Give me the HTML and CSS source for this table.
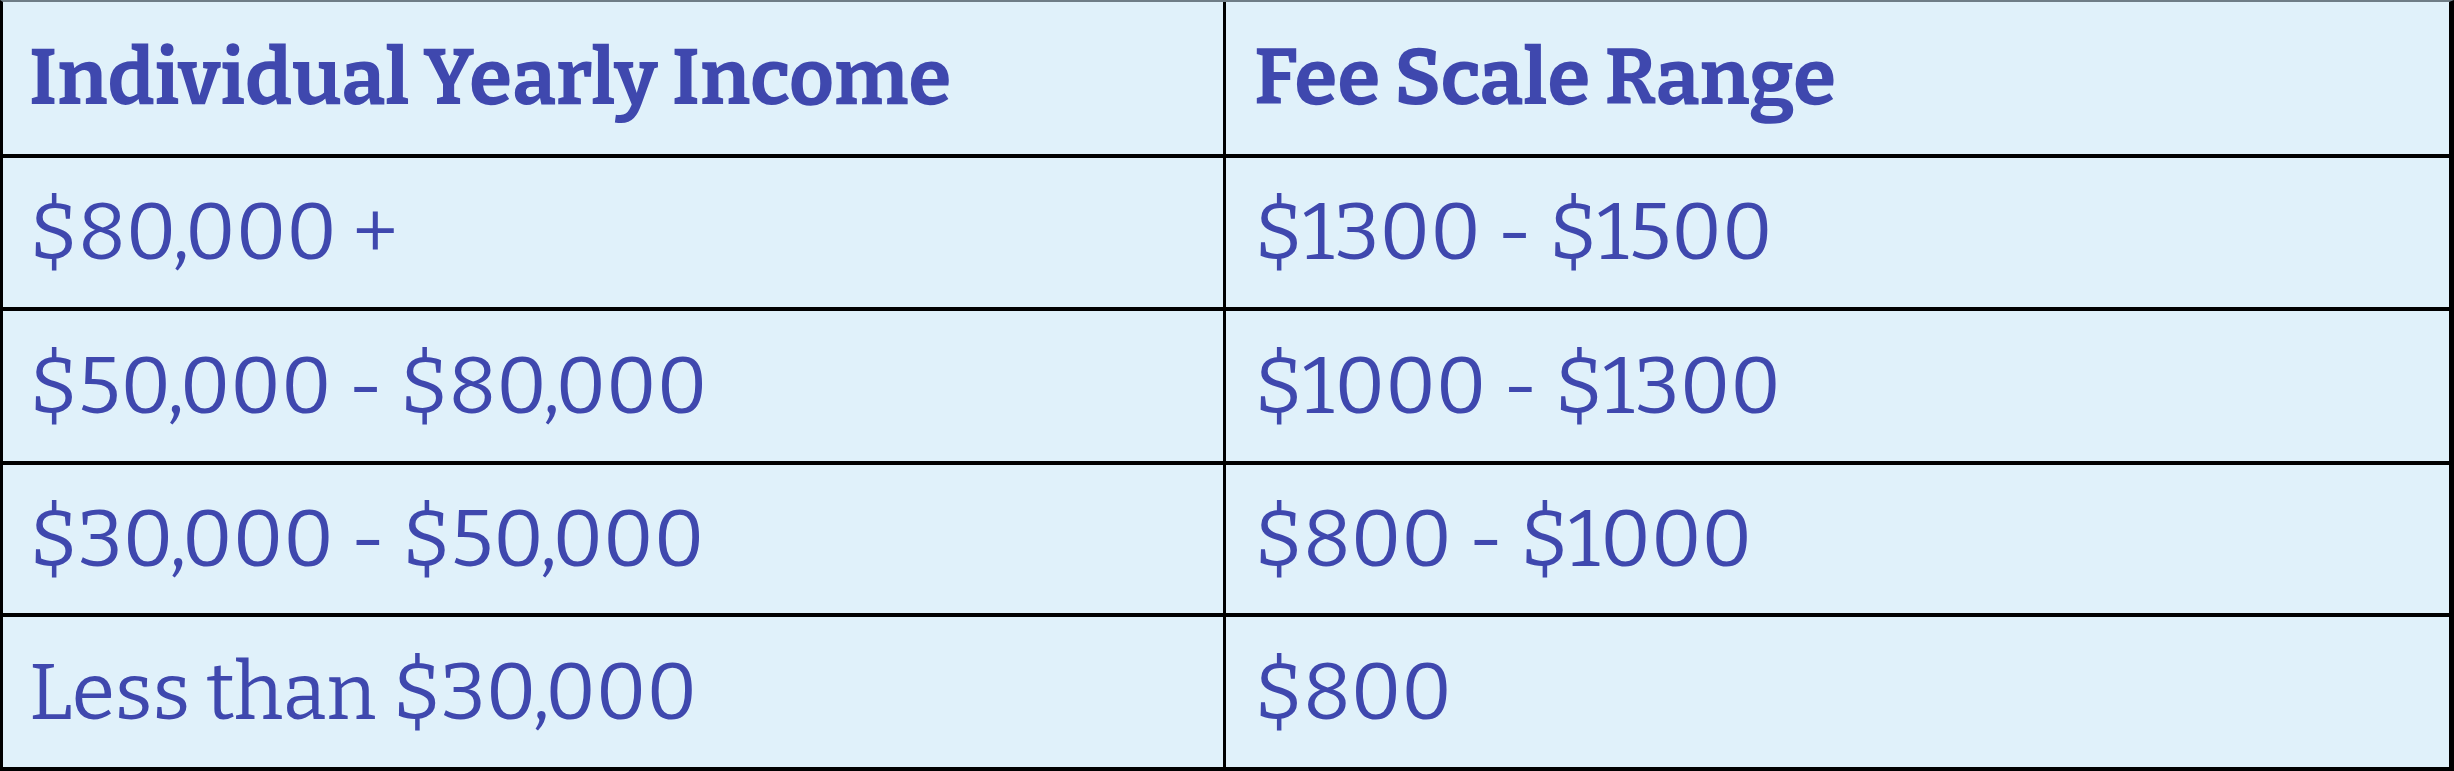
FILE: index.html
```html
<!DOCTYPE html>
<html lang="en">
<head>
<meta charset="utf-8">
<title>Fee Scale</title>
<link rel="stylesheet" href="styles.css">
</head>
<body>
<div class="fee-table">
  <div class="cell head">Individual Yearly Income</div>
  <div class="cell head right">Fee Scale Range</div>
  <div class="cell">$80,000 +</div>
  <div class="cell right">$1300 - $1500</div>
  <div class="cell">$50,000 - $80,000</div>
  <div class="cell right">$1000 - $1300</div>
  <div class="cell">$30,000 - $50,000</div>
  <div class="cell right">$800 - $1000</div>
  <div class="cell last">Less than $30,000</div>
  <div class="cell right last">$800</div>
</div>
</body>
</html>
```
FILE: styles.css
```css
html, body {
  margin: 0;
  padding: 0;
  background: #e0f1fa;
}

.fee-table {
  box-sizing: border-box;
  width: 2454px;
  height: 771px;
  display: grid;
  grid-template-columns: 1fr 1fr;
  grid-template-rows: 156px 153px 154px 152px 150px;
  background: #e0f1fa;
  border-top: 2px solid #6f7d86;
  border-left: 3px solid #000;
  border-right: 5px solid #000;
  border-bottom: 4px solid #000;
  font-family: "Bitter", "Zilla Slab", "DejaVu Serif", serif;
  color: #3f48ae;
}

.cell {
  box-sizing: border-box;
  display: flex;
  align-items: center;
  padding-left: 26px;
  border-bottom: 4px solid #000;
  border-right: 3px solid #000;
  font-size: 79px;
  font-weight: 400;
  white-space: nowrap;
}

.cell.right {
  border-right: none;
  padding-left: 28px;
}

.cell.last {
  border-bottom: none;
}

.cell.head {
  font-size: 78px;
  font-weight: 700;
}
```
